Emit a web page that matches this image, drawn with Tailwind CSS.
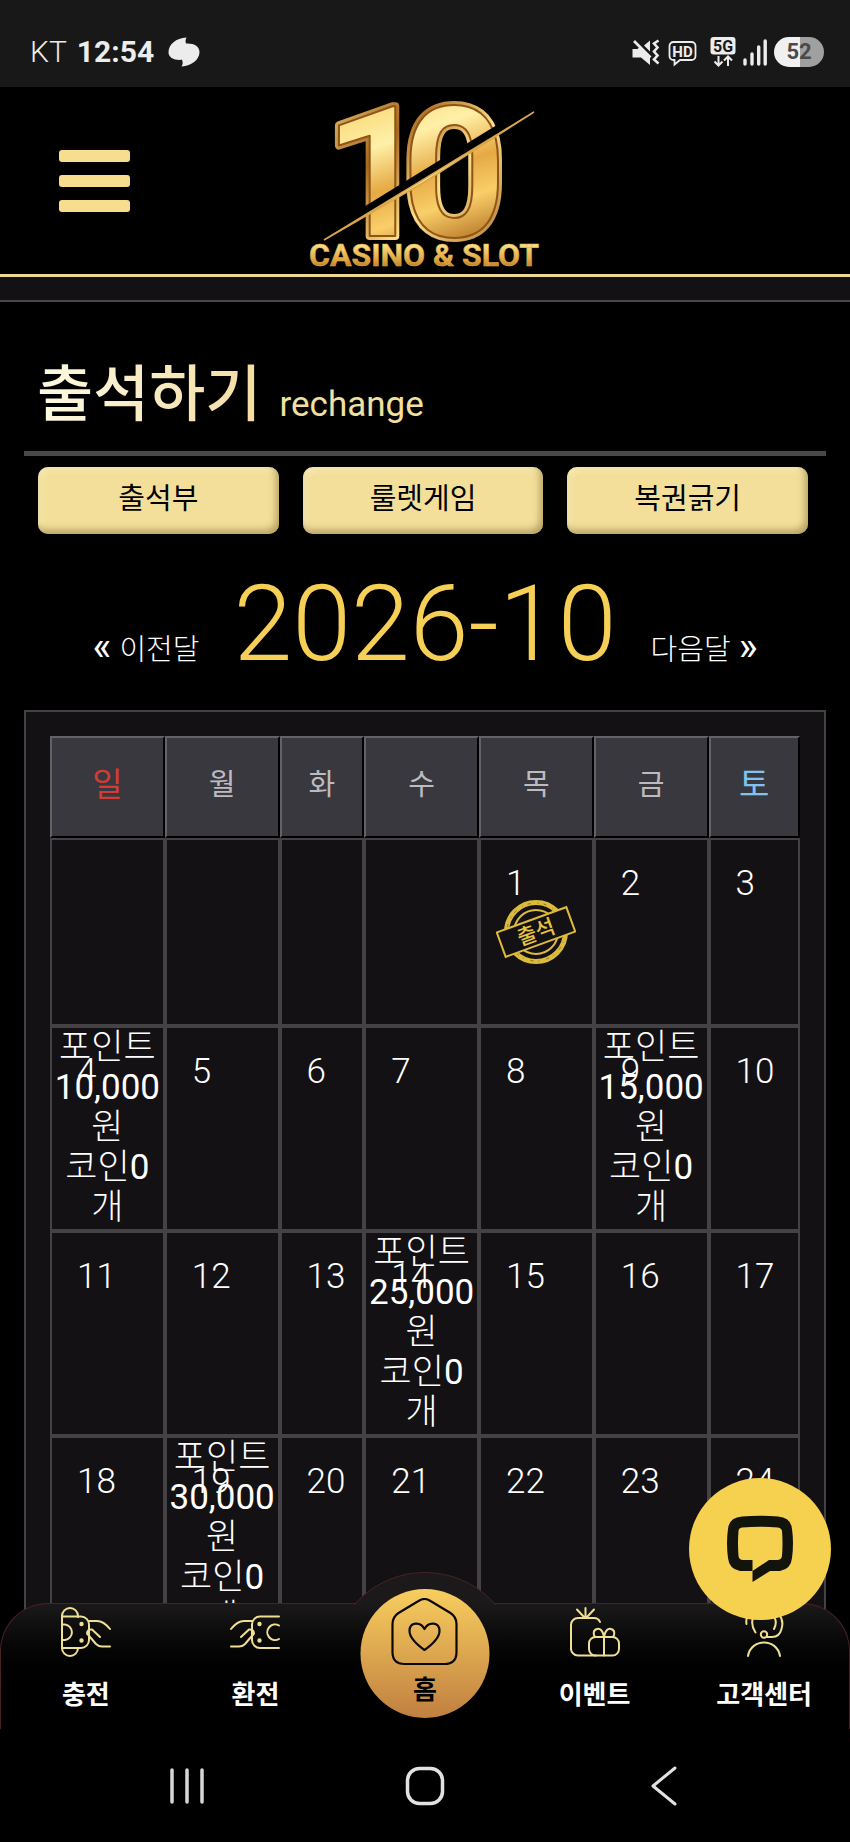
<!DOCTYPE html>
<html lang="ko">
<head>
    <meta charset="UTF-8">
    <meta name="viewport" content="width=device-width, initial-scale=1.0">
    <title>출석하기</title>
    <script src="https://cdn.jsdelivr.net/npm/@tailwindcss/browser@4"></script>
</head>
<body class="bg-black">
<div class="relative flex h-screen flex-col overflow-hidden bg-black font-['Roboto','Noto_Sans_CJK_KR',sans-serif] text-white">

    <!-- phone status bar -->
    <div class="flex h-[87px] shrink-0 items-center justify-between bg-[#181818] pt-4 pr-[26px] pl-[30px] text-[#ececec]">
        <div class="flex items-center gap-[10px] text-[30px] leading-9">
            <span class="font-light">KT</span>
            <span class="font-bold">12:54</span>
            <svg class="ml-1 h-[30px] w-8" viewBox="0 0 32 30" fill="#ececec"><path d="M18.500 0.500C17.500 2.500 17.300 4.500 18 6.500C26 6 31.500 9.500 31.500 15C31.500 22.500 24 28.800 13.500 29.500C15 27.500 15 25 14 22.800C6 23.500 0.500 20.500 0.500 15.500C0.500 7.500 8 1 18.500 0.500Z"/></svg>
        </div>
        <div class="flex items-center gap-[7px]">
            <svg class="h-[30px] w-7" viewBox="0 0 28 30" fill="none" stroke="#ececec" stroke-width="2.600">
                <path d="M0.500 12h5L8 9.500 18 20v8L9 20.500H0.500z" fill="#ececec" stroke="none"/>
                <path d="M12 8.500L18 3.500v11z" fill="#ececec" stroke="none"/>
                <path d="M2 4L18.500 20.500"/>
                <path d="M26.500 3.500l-4.500 3 3.500 4-3.500 4 3.500 4-3.500 4 4.500 4"/>
            </svg>
            <svg class="h-[30px] w-8" viewBox="0 0 32 30" fill="none" stroke="#ececec" stroke-width="1.800">
                <path d="M6.500 5h18a4 4 0 0 1 4 4v10a4 4 0 0 1-4 4H13l-5.500 4.500V23h-1a4 4 0 0 1-4-4V9a4 4 0 0 1 4-4z"/>
                <text x="15.500" y="19.500" text-anchor="middle" font-family="Roboto" font-weight="700" font-size="15" fill="#ececec" stroke="none">HD</text>
            </svg>
            <svg class="ml-1 h-[30px] w-[26px]" viewBox="0 0 26 30" fill="none" stroke="#ececec" stroke-width="2">
                <rect x="0.500" y="0" width="25" height="17.500" rx="3" fill="#ececec" stroke="none"/>
                <text x="13" y="14.500" text-anchor="middle" font-family="Roboto" font-weight="700" font-size="16" fill="#181818" stroke="none">5G</text>
                <path d="M8.500 19v9M4.500 24.500l4 4 4-4M18 29v-9M14 23.500l4-4 4 4"/>
            </svg>
            <svg class="h-[30px] w-6" viewBox="0 0 24 30" stroke="#ececec" stroke-width="3.400" stroke-linecap="round"><path d="M2 23v4M9 17v10M15.700 10v17M22.200 4v23"/></svg>
            <div class="flex h-[30px] w-[50px] items-center justify-center rounded-full bg-linear-to-r from-[#f0f0f0] from-52% to-[#a0a0a0] to-52% text-[22px] leading-7 font-bold text-[#4a4a4a]">52</div>
        </div>
    </div>

    <!-- site header -->
    <header class="grid h-[190px] shrink-0 grid-cols-[1fr_auto_1fr] items-center border-b-3 border-[#ecd893] bg-black pl-[59px]">
        <button type="button" aria-label="메뉴" class="flex w-[71px] flex-col gap-[13px]">
            <span class="h-3 rounded-[3px] bg-[#f8dd8e]"></span>
            <span class="h-3 rounded-[3px] bg-[#f8dd8e]"></span>
            <span class="h-3 rounded-[3px] bg-[#f8dd8e]"></span>
        </button>
        <a href="#" aria-label="10 CASINO &amp; SLOT" class="mr-[61px]">
            <svg class="h-[180px] w-[236px]" viewBox="0 0 236 180">
                <defs>
                    <linearGradient id="gold" x1="0" y1="0" x2="0.300" y2="1">
                        <stop offset="0" stop-color="#fff6c4"/>
                        <stop offset="0.220" stop-color="#f8d877"/>
                        <stop offset="0.420" stop-color="#fff0a8"/>
                        <stop offset="0.620" stop-color="#e6a944"/>
                        <stop offset="0.780" stop-color="#f9cf6a"/>
                        <stop offset="1" stop-color="#b06c20"/>
                    </linearGradient>
                    <linearGradient id="edge" x1="0" y1="0" x2="1" y2="1">
                        <stop offset="0" stop-color="#f9df8a"/>
                        <stop offset="0.350" stop-color="#a9681f"/>
                        <stop offset="0.600" stop-color="#ffe08a"/>
                        <stop offset="1" stop-color="#9a5a19"/>
                    </linearGradient>
                    <linearGradient id="word" x1="0" y1="0" x2="0" y2="1">
                        <stop offset="0.200" stop-color="#fbe58c"/>
                        <stop offset="0.600" stop-color="#e3a945"/>
                        <stop offset="0.850" stop-color="#b9761f"/>
                    </linearGradient>
                </defs>
                <g font-family="Roboto" font-weight="700" font-size="182" stroke-linejoin="round">
                    <text x="18 96" y="145" fill="#7a4412" stroke="url(#edge)" stroke-width="8">10</text>
                    <text x="18 96" y="145" fill="url(#gold)" stroke="#8f5517" stroke-width="2">10</text>
                </g>
                <path d="M30 142L206 35L199 29L30 133Z" fill="#000"/>
                <path d="M18 149L228 21L120 90Z" fill="#fae597" stroke="#d9a64a" stroke-width="1.500"/>
                <text x="118" y="175" text-anchor="middle" font-family="Roboto" font-weight="700" font-size="32" fill="url(#word)" stroke="#e0b04c" stroke-width="0.500">CASINO &amp; SLOT</text>
            </svg>
        </a>
    </header>
    <div class="h-[25px] shrink-0 border-b-2 border-[#4a474a] bg-[#131113]"></div>

    <main class="flex min-h-0 flex-1 flex-col px-6">
        <div class="flex h-[154px] shrink-0 items-baseline gap-[18px] border-b-5 border-[#4a474a] pt-[55px] pl-[13px]">
            <h1 class="bg-linear-to-r from-[#fdf9e3] to-[#f4dda0] bg-clip-text text-[61px] leading-[76px] font-medium text-transparent">출석하기</h1>
            <span class="text-[35px] leading-10 text-[#f1e0a0]">rechange</span>
        </div>

        <div class="grid shrink-0 grid-cols-3 gap-6 pt-[11px] pr-[18px] pl-[14px]">
            <button type="button" class="h-[67px] rounded-[10px] bg-[#f3df9a] pb-1 text-[29px] leading-10 text-black shadow-[inset_-3px_-4px_7px_rgba(120,100,40,0.5),inset_3px_3px_6px_rgba(255,250,210,0.5)]">출석부</button>
            <button type="button" class="h-[67px] rounded-[10px] bg-[#f3df9a] pb-1 text-[29px] leading-10 text-black shadow-[inset_-3px_-4px_7px_rgba(120,100,40,0.5),inset_3px_3px_6px_rgba(255,250,210,0.5)]">룰렛게임</button>
            <button type="button" class="h-[67px] rounded-[10px] bg-[#f3df9a] pb-1 text-[29px] leading-10 text-black shadow-[inset_-3px_-4px_7px_rgba(120,100,40,0.5),inset_3px_3px_6px_rgba(255,250,210,0.5)]">복권긁기</button>
        </div>

        <div class="flex h-44 shrink-0 items-baseline justify-center gap-[34px] pt-[30px] font-light">
            <a href="#" class="flex items-baseline gap-2 text-[29px] leading-10"><span class="text-[40px] font-normal">«</span>이전달</a>
            <h2 class="text-[106px] leading-[120px] text-[#f5cf56]">2026-10</h2>
            <a href="#" class="flex items-baseline gap-2 text-[29px] leading-10">다음달<span class="text-[40px] font-normal">»</span></a>
        </div>

        <!-- calendar -->
        <section class="flex-1 border-2 border-[#454245] bg-[#131113] px-6 pt-6">
            <table class="w-full table-fixed border-separate border-spacing-0 text-center text-[35px] leading-10 font-light [&_b]:font-normal [&_td]:relative [&_td]:border-2 [&_td]:border-[#454245] [&_td]:p-0 [&_td]:align-top [&_td>span]:absolute [&_td>span]:top-6 [&_td>span]:left-[25px] [&_th]:border-2 [&_th]:border-t-[#646266] [&_th]:border-r-black [&_th]:border-b-black [&_th]:border-l-[#646266] [&_th]:bg-[#39383f] [&_th]:p-0 [&_th]:pb-1 [&_th]:text-[29px] [&_th]:font-normal [&_th]:text-[#bdbbc0]">
                <colgroup>
                    <col class="w-[15.3%]"><col class="w-[15.3%]"><col class="w-[11.3%]"><col class="w-[15.3%]"><col class="w-[15.3%]"><col class="w-[15.3%]"><col class="w-[12.2%]">
                </colgroup>
                <thead>
                    <tr class="h-[102px]">
                        <th><span class="text-[33px] text-[#d33c33]">일</span></th>
                        <th>월</th>
                        <th>화</th>
                        <th>수</th>
                        <th>목</th>
                        <th>금</th>
                        <th><span class="text-[33px] text-[#7fc4ef]">토</span></th>
                    </tr>
                </thead>
                <tbody>
                    <tr class="h-[188px]">
                        <td></td>
                        <td></td>
                        <td></td>
                        <td></td>
                        <td>
                            <span>1</span>
                            <svg class="mx-auto mt-[58px] h-[68px] w-20" viewBox="0 0 80 68" fill="none" stroke="#dcbb3c">
                                <circle cx="40" cy="34" r="29.500" stroke-width="5"/>
                                <circle cx="40" cy="34" r="29" stroke="#8a7220" stroke-width="1" stroke-dasharray="3 7 1 5"/>
                                <circle cx="40" cy="34" r="22" stroke-width="2"/>
                                <g transform="rotate(-20 40 34)">
                                    <rect x="3" y="21" width="74" height="26" fill="#131113" stroke-width="2"/>
                                    <text x="40" y="41.500" text-anchor="middle" font-family="Noto Sans CJK KR" font-size="21" font-weight="500" fill="#e6c43e" stroke="none">출석</text>
                                </g>
                            </svg>
                        </td>
                        <td><span>2</span></td>
                        <td><span>3</span></td>
                    </tr>
                    <tr class="h-[205px]">
                        <td><span>4</span>포인트<br><b>10,000</b><br>원<br>코인<b>0</b><br>개</td>
                        <td><span>5</span></td>
                        <td><span>6</span></td>
                        <td><span>7</span></td>
                        <td><span>8</span></td>
                        <td><span>9</span>포인트<br><b>15,000</b><br>원<br>코인<b>0</b><br>개</td>
                        <td><span>10</span></td>
                    </tr>
                    <tr class="h-[205px]">
                        <td><span>11</span></td>
                        <td><span>12</span></td>
                        <td><span>13</span></td>
                        <td><span>14</span>포인트<br><b>25,000</b><br>원<br>코인<b>0</b><br>개</td>
                        <td><span>15</span></td>
                        <td><span>16</span></td>
                        <td><span>17</span></td>
                    </tr>
                    <tr class="h-[205px]">
                        <td><span>18</span></td>
                        <td><span>19</span>포인트<br><b>30,000</b><br>원<br>코인<b>0</b><br>개</td>
                        <td><span>20</span></td>
                        <td><span>21</span></td>
                        <td><span>22</span></td>
                        <td><span>23</span></td>
                        <td><span>24</span></td>
                    </tr>
                </tbody>
            </table>
        </section>
    </main>

    <!-- fixed bottom area: tab bar + phone navigation -->
    <div class="absolute inset-x-0 bottom-0">
        <nav class="relative h-[126px] rounded-t-[48px] border border-b-0 border-[#4a2226] bg-linear-to-b from-[#1b191a] to-black to-80%">
            <div class="absolute -top-8 left-1/2 h-[33px] w-[188px] -translate-x-1/2 overflow-hidden">
                <div class="size-[188px] rounded-full border border-[#4a2226] bg-[#1b191a]"></div>
            </div>
            <div class="grid h-full grid-cols-5 text-[26px] leading-8 font-bold">
                <a href="#" class="flex flex-col items-center gap-[22px] pt-[3px]">
                    <svg class="size-[50px]" viewBox="0 0 50 50" fill="none" stroke="#efdf94" stroke-width="2" stroke-linecap="round" stroke-linejoin="round">
                        <path d="M17 10V9A8 8 0 0 0 1 9V41A8 8 0 0 0 17 41"/>
                        <path d="M1 9.500H20A8 8 0 0 1 28 17.500V33A8 8 0 0 1 20 41H1"/>
                        <path d="M2 17.500H4A7.800 7.800 0 0 1 4 33H2"/>
                        <circle cx="20.500" cy="17" r="1.200" fill="#efdf94"/><circle cx="20.500" cy="33.500" r="1.200" fill="#efdf94"/>
                        <path d="M28 14H36C41 14 45 17 49 22M39 30L31 22.500C28 22 26 24 26 26.500L35 37C37 39 38 39.500 41 39.500H49"/>
                    </svg>
                    <span>충전</span>
                </a>
                <a href="#" class="flex flex-col items-center gap-[22px] pt-[3px]">
                    <svg class="size-[50px]" viewBox="0 0 50 50" fill="none" stroke="#efdf94" stroke-width="2" stroke-linecap="round" stroke-linejoin="round">
                        <path d="M49 9.500H30A8 8 0 0 0 22 17.500V33A8 8 0 0 0 30 41H49"/>
                        <path d="M49 18.500A7.800 7.800 0 1 0 49 32"/>
                        <circle cx="29.500" cy="17" r="1.200" fill="#efdf94"/><circle cx="29.500" cy="33.500" r="1.200" fill="#efdf94"/>
                        <path d="M22 14H14C9 14 5 17 1 22M11 30L19 22.500C22 22 24 24 24 26.500L15 37C13 39 12 39.500 9 39.500H1"/>
                    </svg>
                    <span>환전</span>
                </a>
                <div class="relative">
                    <a href="#" class="absolute -top-[15px] left-1/2 flex size-[129px] -translate-x-1/2 flex-col items-center rounded-full bg-linear-to-b from-[#f8ce5f] to-[#c08040] pt-[9px] text-black">
                        <svg class="h-[68px] w-[68px] shrink-0" viewBox="0 0 68 68" fill="none" stroke="#0b0805" stroke-width="2.200" stroke-linejoin="round">
                            <path d="M28 3Q34 -1 40 3L60 15Q66 19 66 26V54Q66 66 54 66H14Q2 66 2 54V26Q2 19 8 15Z"/>
                            <path d="M34 52C27 47 19 40 19 33C19 24 30 23 34 31C38 23 49 24 49 33C49 40 41 47 34 52Z"/>
                        </svg>
                        <span class="mt-2">홈</span>
                    </a>
                </div>
                <a href="#" class="flex flex-col items-center gap-[22px] pt-[3px]">
                    <svg class="size-[50px]" viewBox="0 0 50 50" fill="none" stroke="#efdf94" stroke-width="2" stroke-linecap="round" stroke-linejoin="round">
                        <path d="M30 15C29 12.500 27 11 24 11H8A7 7 0 0 0 1 18V41A7 7 0 0 0 8 48.500H26"/>
                        <path d="M15.500 10V1M14 10L7 2.500M17 10L24 2.500"/>
                        <rect x="19" y="30" width="30" height="18.500" rx="6.500"/>
                        <path d="M34 30V48.500M34 29.500C33 24 30 21 27 22C23 23 23 27 25 30M34 29.500C35 24 38 21 41 22C45 23 45 27 43 30"/>
                    </svg>
                    <span>이벤트</span>
                </a>
                <a href="#" class="flex flex-col items-center gap-[22px] pt-[3px]">
                    <svg class="size-[50px]" viewBox="0 0 50 50" fill="none" stroke="#efdf94" stroke-width="2" stroke-linecap="round">
                        <path d="M16.500 25.500C12 19 12 11 17 7.500C22 4 29 4 33 8C38 12 37 18 35 22"/>
                        <path d="M7.500 17C6 9 13 1 25 1C38 1 46 11 42.500 22C41 28 37 30 33 30H28"/>
                        <circle cx="25" cy="27.500" r="3.200"/>
                        <path d="M9 49C12 31 38 31 41 49"/>
                    </svg>
                    <span>고객센터</span>
                </a>
            </div>
        </nav>
        <div class="grid h-[113px] grid-cols-[1fr_auto_1fr] items-center bg-black">
            <button type="button" aria-label="최근 앱" class="ml-[169px] w-9">
                <svg class="h-9 w-9" viewBox="0 0 36 36" stroke="#d8d5d8" stroke-width="3.500" stroke-linecap="round"><path d="M3 2v32M18 2v32M33 2v32"/></svg>
            </button>
            <button type="button" aria-label="홈 화면">
                <svg class="size-10" viewBox="0 0 40 40" fill="none" stroke="#e4e1e4" stroke-width="3.500"><rect x="2.500" y="2.500" width="35" height="35" rx="12"/></svg>
            </button>
            <button type="button" aria-label="뒤로" class="mr-[172px] justify-self-end">
                <svg class="h-10 w-7" viewBox="0 0 28 40" fill="none" stroke="#e4e1e4" stroke-width="3" stroke-linecap="round" stroke-linejoin="round"><path d="M25 2L3 20l22 18"/></svg>
            </button>
        </div>
        <!-- live chat -->
        <button type="button" aria-label="채팅 상담" class="absolute right-[19px] bottom-[222px] flex size-[142px] items-center justify-center rounded-full bg-[#f6d04f]">
            <svg class="h-[68px] w-[68px]" viewBox="0 0 68 68" fill="#12130c" fill-rule="evenodd"><path d="M16 1.500Q34 0 52 1.500Q65 2.500 66 14Q68 28 66 43Q65 54 54 56H44L26.500 67V56H14Q3 54 2 43Q0 28 2 14Q3 2.500 16 1.500ZM16 12.500Q12.500 13 12.500 16Q11.500 28 12.500 41Q13 45 17 45H26.500V56L43 45H51Q55.500 45 56 41Q57 28 56 16Q55.500 13 52 12.500Q34 11 16 12.500Z"/></svg>
        </button>
    </div>
</div>
</body>
</html>
